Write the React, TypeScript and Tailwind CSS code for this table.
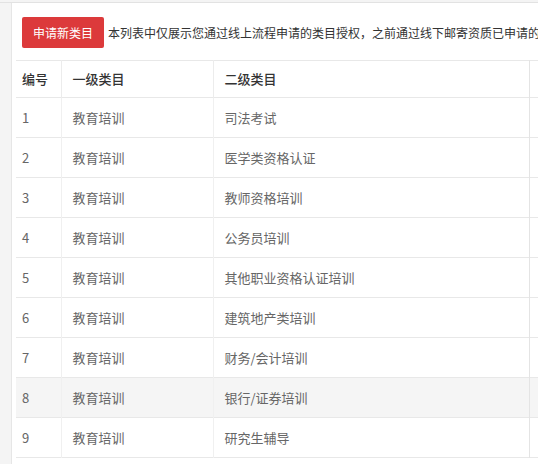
const rows = [
  "司法考试",
  "医学类资格认证",
  "教师资格培训",
  "公务员培训",
  "其他职业资格认证培训",
  "建筑地产类培训",
  "财务/会计培训",
  "银行/证券培训",
  "研究生辅导",
];

export default function App() {
  return (
    <div
      className="w-[538px] h-[464px] overflow-hidden bg-[#f4f4f4] pt-[2px]"
      style={{ fontFamily: '"Microsoft YaHei", "Noto Sans CJK SC", sans-serif' }}
    >
      <div className="border-t border-[#e2e2e2] h-full pl-[11px]">
        <div className="h-full bg-white border-l border-[#e6e6e6] pt-[14px]">
          {/* toolbar */}
          <div className="flex items-center pl-[10px] h-[31px] whitespace-nowrap overflow-hidden">
            <button className="h-[31px] w-[82px] rounded-[2px] bg-[#dc3a3b] text-white text-[12px] shrink-0">
              申请新类目
            </button>
            <span className="ml-[4px] text-[12px] text-[#333]">
              本列表中仅展示您通过线上流程申请的类目授权，之前通过线下邮寄资质已申请的类目
            </span>
          </div>

          {/* table */}
          <div className="mt-[12px] ml-[4px]">
            <table className="w-[530px] table-fixed border-collapse text-[13px]">
              <colgroup>
                <col className="w-[45px]" />
                <col className="w-[152px]" />
                <col className="w-[316px]" />
                <col />
              </colgroup>
              <thead>
                <tr className="h-[37px] text-[#333] border-t border-b border-[#e8e8e8]">
                  <th className="text-left font-medium pl-[6px]">编号</th>
                  <th className="text-left font-medium pl-[11px] border-l border-[#ececec]">一级类目</th>
                  <th className="text-left font-medium pl-[11px] border-l border-[#ececec]">二级类目</th>
                  <th className="border-l border-[#e4e4e4]"></th>
                </tr>
              </thead>
              <tbody>
                {rows.map((r, i) => (
                  <tr
                    key={i}
                    className={
                      "h-[40px] text-[#666] border-b border-[#e8e8e8] " +
                      (i === 7 ? "bg-[#f5f5f5]" : "bg-white")
                    }
                  >
                    <td className="pl-[6px]">{i + 1}</td>
                    <td className="pl-[11px] border-l border-[#f0f0f0]">教育培训</td>
                    <td className="pl-[11px] border-l border-[#f0f0f0]">{r}</td>
                    <td className="border-l border-[#e4e4e4]"></td>
                  </tr>
                ))}
              </tbody>
            </table>
          </div>
        </div>
      </div>
    </div>
  );
}
